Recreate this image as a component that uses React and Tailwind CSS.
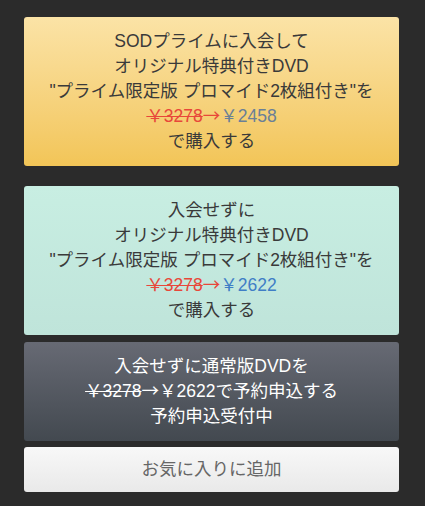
const font = { fontFamily: '"Liberation Sans", "Noto Sans CJK JP", sans-serif' };
const cjk = { fontFamily: '"Noto Sans CJK JP", sans-serif' };

function Price({ to, toColor }) {
  return (
    <p>
      <span className="text-[#e8473a] line-through decoration-[#e8473a]">￥3278</span>
      <span className="text-[#e8473a] leading-none" style={cjk}>→</span>
      <span className={toColor}>￥{to}</span>
    </p>
  );
}

export default function App() {
  return (
    <div className="min-h-[506px] bg-[#2b2b2b] px-6 pt-[17px] pb-3 text-[17.5px] leading-[25px]" style={font}>
      <div className="flex w-[375px] flex-col">
        <button type="button" className="rounded-[3px] bg-gradient-to-b from-[#fbe3a6] to-[#f2c557] py-3 text-center text-[#3a3a3a] [&>p]:h-[25px]">
          <p>SODプライムに入会して</p>
          <p>オリジナル特典付きDVD</p>
          <p>"プライム限定版 プロマイド2枚組付き"を</p>
          <Price to="2458" toColor="text-[#6a7f97]" />
          <p>で購入する</p>
        </button>

        <button type="button" className="mt-5 rounded-[3px] bg-gradient-to-b from-[#c8eee2] to-[#bfe4da] py-3 text-center text-[#3a3a3a] [&>p]:h-[25px]">
          <p>入会せずに</p>
          <p>オリジナル特典付きDVD</p>
          <p>"プライム限定版 プロマイド2枚組付き"を</p>
          <Price to="2622" toColor="text-[#3f7ec6]" />
          <p>で購入する</p>
        </button>

        <button type="button" className="mt-[7px] rounded-[3px] bg-gradient-to-b from-[#676a74] to-[#434950] py-3 text-center text-white [&>p]:h-[25px]">
          <p>入会せずに通常版DVDを</p>
          <p>
            <span className="line-through">￥3278</span>
            <span className="leading-none" style={cjk}>→</span>￥2622で予約申込する
          </p>
          <p>予約申込受付中</p>
        </button>

        <button type="button" className="mt-[6px] h-[45px] rounded-[3px] bg-gradient-to-b from-[#f8f8f8] to-[#e9e9e9] text-center text-[#666]">
          お気に入りに追加
        </button>
      </div>
    </div>
  );
}
